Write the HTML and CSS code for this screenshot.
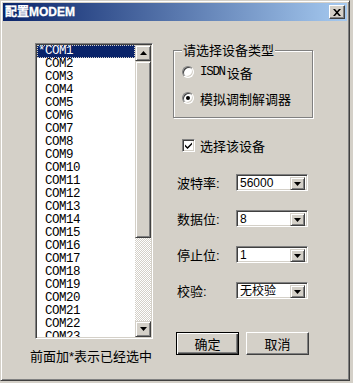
FILE: index.html
```html
<!DOCTYPE html>
<html lang="zh-CN">
<head>
<meta charset="UTF-8">
<title>配置MODEM</title>
<link rel="stylesheet" href="styles.css">
</head>
<body>

<div class="window">
  <div class="titlebar">
    <span class="title">配置MODEM</span>
    <button class="close">
      <svg width="8" height="7" viewBox="0 0 8 7"><path d="M0 0h2l2 2.2 2-2.2h2l-3 3.5 3 3.5h-2l-2-2.2-2 2.2h-2l3-3.5z" fill="#000"/></svg>
    </button>
  </div>

  <div class="client">
    <div class="left">
      <div class="listbox">
        <ul class="items">
          <li class="sel">*COM1</li>
          <li> COM2</li>
          <li> COM3</li>
          <li> COM4</li>
          <li> COM5</li>
          <li> COM6</li>
          <li> COM7</li>
          <li> COM8</li>
          <li> COM9</li>
          <li> COM10</li>
          <li> COM11</li>
          <li> COM12</li>
          <li> COM13</li>
          <li> COM14</li>
          <li> COM15</li>
          <li> COM16</li>
          <li> COM17</li>
          <li> COM18</li>
          <li> COM19</li>
          <li> COM20</li>
          <li> COM21</li>
          <li> COM22</li>
          <li> COM23</li>
        </ul>
        <div class="scrollbar">
          <div class="sb-btn">
            <svg width="7" height="4" viewBox="0 0 7 4"><path d="M3.5 0L7 4H0z" fill="#000"/></svg>
          </div>
          <div class="thumb"></div>
          <div class="track"></div>
          <div class="sb-btn">
            <svg width="7" height="4" viewBox="0 0 7 4"><path d="M0 0h7L3.5 4z" fill="#000"/></svg>
          </div>
        </div>
      </div>
      <p class="hint">前面加*表示已经选中</p>
    </div>

    <div class="right">
      <fieldset class="group">
        <legend>请选择设备类型</legend>
        <div class="opts">
          <label class="opt"><span class="radio"></span><span class="mono">ISDN</span>设备</label>
          <label class="opt"><span class="radio on"></span>模拟调制解调器</label>
        </div>
      </fieldset>

      <label class="check-row">
        <span class="checkbox">
          <svg width="9" height="9" viewBox="0 0 9 9"><path d="M1 3.5l2.5 2.5 4.5-4.5v2l-4.5 4.5-2.5-2.5z" fill="#000"/></svg>
        </span>选择该设备
      </label>

      <div class="field">
        <span class="field-label">波特率:</span>
        <div class="combo"><span class="value">56000</span><span class="dd"><svg width="7" height="4" viewBox="0 0 7 4"><path d="M0 0h7L3.5 4z" fill="#000"/></svg></span></div>
      </div>
      <div class="field">
        <span class="field-label">数据位:</span>
        <div class="combo"><span class="value">8</span><span class="dd"><svg width="7" height="4" viewBox="0 0 7 4"><path d="M0 0h7L3.5 4z" fill="#000"/></svg></span></div>
      </div>
      <div class="field">
        <span class="field-label">停止位:</span>
        <div class="combo"><span class="value">1</span><span class="dd"><svg width="7" height="4" viewBox="0 0 7 4"><path d="M0 0h7L3.5 4z" fill="#000"/></svg></span></div>
      </div>
      <div class="field">
        <span class="field-label">校验:</span>
        <div class="combo"><span class="value">无校验</span><span class="dd"><svg width="7" height="4" viewBox="0 0 7 4"><path d="M0 0h7L3.5 4z" fill="#000"/></svg></span></div>
      </div>

      <div class="buttons">
        <button class="btn default">确定</button>
        <button class="btn">取消</button>
      </div>
    </div>
  </div>
</div>

</body>
</html>
```

FILE: styles.css
```css
* {
  box-sizing: border-box;
}

body {
  margin: 0;
  background: #d4d0c8;
  color: #000;
  font-family: "Liberation Sans", "Noto Sans CJK SC", sans-serif;
  font-size: 13px;
}

.window {
  width: 350px;
  height: 381px;
  padding: 2px;
  background: #d4d0c8;
  border: 1px solid;
  border-color: #d4d0c8 #404040 #404040 #d4d0c8;
  box-shadow: inset 1px 1px #fff, inset -1px -1px #808080;
}

.titlebar {
  height: 18px;
  display: flex;
  align-items: center;
  justify-content: space-between;
  padding: 0 2px;
  background: linear-gradient(to right, #0a246a, #a6caf0);
}

.title {
  color: #fff;
  font-weight: bold;
  font-size: 12px;
  line-height: 18px;
  -webkit-text-stroke: 0.3px #fff;
}

.close {
  width: 16px;
  height: 14px;
  padding: 0;
  display: flex;
  align-items: center;
  justify-content: center;
  background: #d4d0c8;
  border: 1px solid;
  border-color: #fff #404040 #404040 #fff;
  box-shadow: inset -1px -1px #808080;
}

.client {
  display: flex;
  height: 357px;
}

/* left: port list */
.left {
  width: 155px;
  padding-left: 27px;
}

.listbox {
  display: flex;
  width: 118px;
  height: 296px;
  margin: 22px 0 0 5px;
  background: #fff;
  border: 1px solid;
  border-color: #808080 #fff #fff #808080;
  box-shadow: inset 1px 1px #404040, inset -1px -1px #d4d0c8;
  padding: 1px;
}

.items {
  flex: 1;
  margin: 0;
  padding: 0;
  list-style: none;
  overflow: hidden;
}

.items li {
  height: 13px;
  line-height: 13px;
  padding-left: 1px;
  white-space: pre;
  font-family: "Liberation Mono", monospace;
  font-size: 12.5px;
  letter-spacing: -0.5px;
}

.items li.sel {
  background: #0a246a;
  color: #fff;
  outline: 1px dotted #d4d0c8;
  outline-offset: -1px;
}

.scrollbar {
  width: 16px;
  display: flex;
  flex-direction: column;
}

.sb-btn,
.thumb {
  background: #d4d0c8;
  border: 1px solid;
  border-color: #d4d0c8 #404040 #404040 #d4d0c8;
  box-shadow: inset 1px 1px #fff, inset -1px -1px #808080;
}

.sb-btn {
  height: 16px;
  display: flex;
  align-items: center;
  justify-content: center;
}

.thumb {
  height: 177px;
}

.track {
  flex: 1;
  background: repeating-conic-gradient(#fff 0 25%, #d4d0c8 0 50%) 0 0 / 2px 2px;
}

.hint {
  margin: 10px 0 0;
  line-height: 16px;
  white-space: nowrap;
}

/* right: options */
.right {
  width: 140px;
  margin-left: 15px;
}

.group {
  margin: 22px 0 0;
  padding: 0 8px;
  height: 75px;
  min-width: 0;
  border: 1px solid #808080;
  box-shadow: inset 1px 1px #fff, 1px 1px #fff;
}

.group legend {
  padding: 0 1px;
  line-height: 15px;
  background: #d4d0c8;
}

.opts {
  padding-top: 1px;
}

.opt {
  display: flex;
  align-items: center;
  height: 26px;
}

.radio {
  width: 12px;
  height: 12px;
  margin-right: 6px;
  border-radius: 50%;
  background: #fff;
  border: 1px solid;
  border-color: #808080 #fff #fff #808080;
  box-shadow: inset 1px 1px #404040, inset -1px -1px #d4d0c8;
  display: flex;
  align-items: center;
  justify-content: center;
}

.radio.on::after {
  content: "";
  width: 4px;
  height: 4px;
  border-radius: 50%;
  background: #000;
}

.mono {
  font-family: "Liberation Mono", monospace;
  font-size: 12.5px;
  letter-spacing: -1.3px;
  margin-right: 2px;
}

.check-row {
  display: flex;
  align-items: center;
  height: 16px;
  margin-top: 19px;
  padding-left: 9px;
}

.checkbox {
  width: 13px;
  height: 13px;
  margin-right: 5px;
  background: #fff;
  border: 1px solid;
  border-color: #808080 #fff #fff #808080;
  box-shadow: inset 1px 1px #404040, inset -1px -1px #d4d0c8;
  display: flex;
  align-items: center;
  justify-content: center;
}

.field {
  display: flex;
  align-items: center;
  height: 17px;
  margin-top: 19px;
  padding-left: 4px;
}

.check-row + .field {
  margin-top: 21px;
}

.field-label {
  width: 59px;
}

.combo {
  display: flex;
  width: 72px;
  height: 17px;
  padding: 2px;
  background: #fff;
  border: 1px solid;
  border-color: #808080 #fff #fff #808080;
  box-shadow: inset 1px 1px #404040, inset -1px -1px #d4d0c8;
}

.combo .value {
  flex: 1;
  padding-left: 1px;
  line-height: 13px;
  font-size: 12px;
}

.dd {
  width: 15px;
  height: 13px;
  display: flex;
  align-items: center;
  justify-content: center;
  background: #d4d0c8;
  border: 1px solid;
  border-color: #d4d0c8 #404040 #404040 #d4d0c8;
  box-shadow: inset 1px 1px #fff, inset -1px -1px #808080;
}

.buttons {
  display: flex;
  gap: 7px;
  margin-top: 33px;
  padding-left: 3px;
}

.btn {
  width: 63px;
  height: 23px;
  padding: 0;
  font-family: "Liberation Sans", "Noto Sans CJK SC", sans-serif;
  font-size: 13px;
  color: #000;
  background: #d4d0c8;
  border: 1px solid;
  border-color: #fff #404040 #404040 #fff;
  box-shadow: inset -1px -1px #808080;
}

.btn.default {
  border-color: #000;
  box-shadow: inset 1px 1px #fff, inset -1px -1px #404040, inset -2px -2px #808080;
}
```
